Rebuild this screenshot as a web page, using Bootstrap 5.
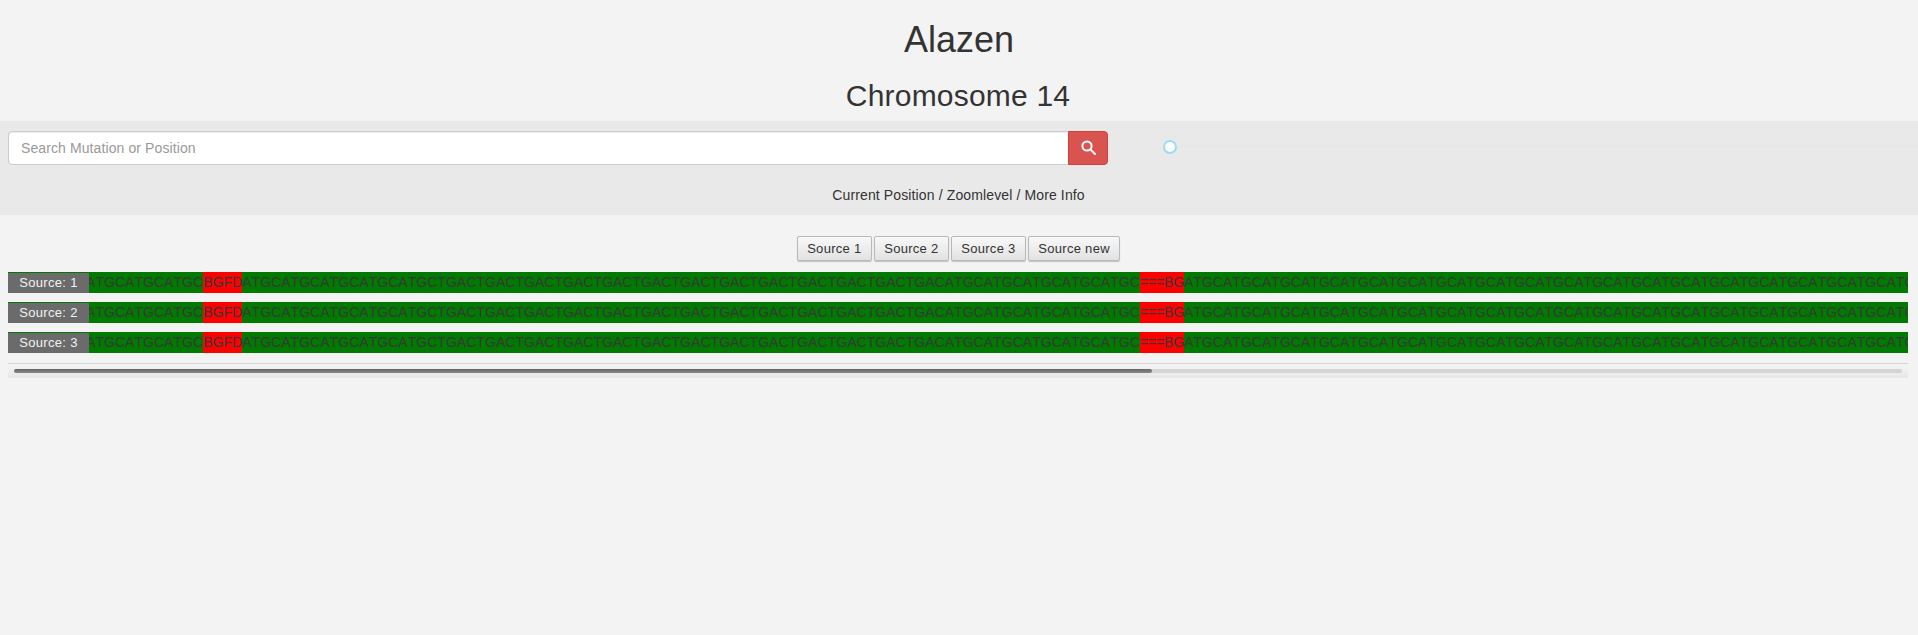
<!DOCTYPE html>
<html lang="en">
<head>
    <meta charset="UTF-8">
    <meta name="viewport" content="width=device-width, initial-scale=1.0">
    <title>Alazen - Chromosome 14</title>
    <link href="https://cdn.jsdelivr.net/npm/bootstrap@5.3.2/dist/css/bootstrap.min.css" rel="stylesheet">
    <style>
        body { background: #f3f3f3; color: #333; font-family: "Liberation Sans", Arial, sans-serif; font-size: 14px; line-height: 1.43; font-kerning: none; }
        .page-title { font-size: 36px; line-height: 39.6px; margin: 20px 0 0; font-weight: 400; color: #333; }
        .page-sub { font-size: 30px; line-height: 33px; margin: 19px 0 9px; padding-right: 2px; font-weight: 400; color: #333; letter-spacing: .2px; }
        .search-band { background: #e9e9e9; height: 94px; padding: 10px 0 0 8px; }
        .search-group { width: 1100px; }
        .search-group .form-control { height: 34px; font-size: 14px; letter-spacing: .1px; padding: 6px 12px; border: 1px solid #ccc; border-radius: 4px 0 0 4px; box-shadow: inset 0 1px 1px rgba(0,0,0,.075); color: #555; }
        .search-group .form-control::placeholder { color: #999; }
        .search-btn { width: 40px; height: 34px; padding: 0; background: #d9534f; border: 1px solid #d43f3a; border-radius: 0 4px 4px 0; }
        .zoom-range { flex: 1; height: 14px; margin: -2px 0 0 55px; padding: 0; appearance: none; -webkit-appearance: none; background: transparent; display: block; }
        .zoom-range::-webkit-slider-runnable-track { height: 3px; background: #e7e7e7; border: 0; }
        .zoom-range::-webkit-slider-thumb { -webkit-appearance: none; appearance: none; width: 14px; height: 14px; margin-top: -5.5px; background: #fff; border: 2px solid #99dcf7; border-radius: 50%; box-shadow: none; }
        .info-line { font-size: 14px; letter-spacing: .125px; line-height: 20px; margin-top: 20px; padding-right: 9px; }
        .source-bar { margin-top: 21px; padding-right: 1px; gap: 2px; height: 25px; }
        .source-btn { height: 25px; padding: 0 9.3px; font-size: 13px; letter-spacing: .3px; line-height: 1; color: #333; border: 1px solid #b8b8b8; border-radius: 2px; background: linear-gradient(#f8f8f8, #e2e2e2); box-shadow: 0 1px 1px rgba(0,0,0,.2); }
        .seq-area { margin: 11px 10px 0 8px; }
        .seq-row { position: relative; height: 21px; margin-bottom: 9px; overflow: hidden; white-space: nowrap; background: #007a00; line-height: 21px; font-size: 14px; letter-spacing: .035px; color: #383838; }
        .seq-bad { background: #f00; display: inline-block; }
        .seq-gap { letter-spacing: -.15px; }
        .seq-label { position: absolute; left: 0; top: 1px; width: 81px; height: 20px; line-height: 20px; text-align: center; background: #6b6b6b; color: #f2f2f2; font-size: 13px; letter-spacing: .3px; }
        .fake-scroll { height: 15px; margin-top: 10px; padding: 5px 6px 0; border-top: 1px solid #d6d6d6; background: linear-gradient(#f5f5f5, #e7e7e7); }
        .fake-track { height: 4px; border-radius: 2px; background: #d4d4d4; }
        .fake-thumb { height: 4px; border-radius: 2px; background: linear-gradient(#666, #888); }
    </style>
</head>
<body>
    <h1 class="page-title text-center">Alazen</h1>
    <h2 class="page-sub text-center">Chromosome 14</h2>

    <!-- Search and zoom -->
    <div class="search-band">
        <div class="d-flex align-items-center">
            <div class="input-group search-group flex-nowrap">
                <input type="text" class="form-control" placeholder="Search Mutation or Position">
                <button type="button" class="btn search-btn d-flex align-items-center justify-content-center">
                    <svg width="15" height="15" viewBox="0 0 15 15" fill="none" stroke="#fff" stroke-width="2"><circle cx="6" cy="6" r="4.6"/><path d="M9.4 9.4l4.6 4.6" stroke-linecap="round"/></svg>
                </button>
            </div>
            <input type="range" class="zoom-range" min="0" max="100" value="0" aria-label="Zoom">
        </div>
        <div class="info-line text-center">Current Position / Zoomlevel / More Info</div>
    </div>

    <div class="source-bar d-flex justify-content-center">
        <button type="button" class="btn source-btn">Source 1</button>
        <button type="button" class="btn source-btn">Source 2</button>
        <button type="button" class="btn source-btn">Source 3</button>
        <button type="button" class="btn source-btn">Source new</button>
    </div>

    <!-- Sequence rows -->
    <div class="seq-area">
        <div id="seq-rows"></div>
        <div class="fake-scroll">
            <div class="fake-track"><div class="fake-thumb" style="width: 60.3%"></div></div>
        </div>
    </div>

    <script>
        const seq = 'ATGC'.repeat(5) + '<span class="seq-bad">BGFD</span>' + 'ATGC'.repeat(5) + 'TGAC'.repeat(13) + 'ATGC'.repeat(5) +
            '<span class="seq-bad seq-gap">===BG</span>' + 'ATGC'.repeat(50);
        document.getElementById('seq-rows').innerHTML = [1, 2, 3].map(n =>
            `<div class="seq-row"><span>${seq}</span><div class="seq-label">Source: ${n}</div></div>`).join('');
    </script>
    <script src="https://cdn.jsdelivr.net/npm/bootstrap@5.3.2/dist/js/bootstrap.bundle.min.js"></script>
</body>
</html>
